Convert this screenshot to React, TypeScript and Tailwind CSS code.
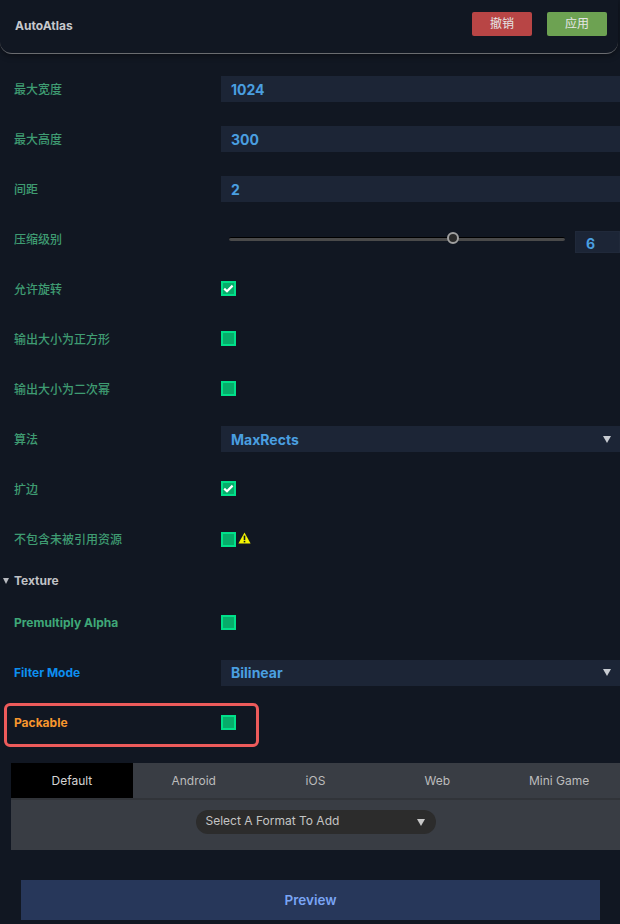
const font = { fontFamily: '"Inter", "Noto Sans CJK SC", sans-serif' };

function Check({ checked, low }: { checked?: boolean; low?: boolean }) {
  return (
    <div className={`w-[15px] h-[15px] border-2 border-[#00e08a] bg-[#06ad6a] flex items-center justify-center ${low ? "" : "-mt-[1px]"}`}>
      {checked && (
        <svg width="11" height="9" viewBox="0 0 11 9">
          <path d="M1.2 4.6 L4 7.2 L9.6 1.6" fill="none" stroke="#ffffff" strokeWidth="2.2" />
        </svg>
      )}
    </div>
  );
}

function Row({ label, color = "text-[#3f9c72] font-medium", children }: { label: string; color?: string; children?: React.ReactNode }) {
  return (
    <div className="h-[50px] flex items-center">
      <div className={`w-[221px] pl-[14px] pt-[1px] text-[12px] ${color}`}>{label}</div>
      <div className="flex-1 flex items-center min-w-0">{children}</div>
    </div>
  );
}

function Field({ value, arrow, className = "" }: { value: string; arrow?: boolean; className?: string }) {
  return (
    <div className={`h-[26px] flex-1 bg-[#1c2536] flex items-center justify-between pl-[10px] pr-[9px] text-[14px] font-bold text-[#4a9fe0] ${className}`}>
      <span>{value}</span>
      {arrow && <span className="w-0 h-0 border-l-[4px] border-r-[4px] border-t-[7px] border-l-transparent border-r-transparent border-t-[#c8ccd2]" />}
    </div>
  );
}

function Slider() {
  return (
    <div className="flex-1 flex items-center">
      <div className="relative w-[336px] ml-[8px] h-[4px] bg-[#4a4a4a] rounded-full border-t border-black">
        <div className="absolute left-[218px] top-[-6px] w-[12px] h-[12px] rounded-full border-2 border-[#a0a0a0] bg-[#2a2a2a]" />
      </div>
      <div className="ml-[10px] w-[45px] h-[22px] bg-[#1c2536] mt-[5px] pl-[10px] text-[14px] font-bold text-[#4a9fe0] leading-[24px] border border-[#20293a]">6</div>
    </div>
  );
}

export default function App() {
  const tabs = ["Default", "Android", "iOS", "Web", "Mini Game"];
  return (
    <div className="w-[620px] h-[924px] overflow-hidden bg-[#111722]" style={font}>
      <header className="w-[618px] h-[54px] flex items-center justify-between pl-[15px] pr-[11px] rounded-b-[12px] border-b border-[#6a6c70] shadow-[0_2px_6px_rgba(0,0,0,0.4)] bg-[#111722]">
        <span className="text-[12px] font-bold text-[#c6c8cc] -mt-[1px]">AutoAtlas</span>
        <div className="flex gap-[15px] -mt-[5px]">
          <button className="w-[60px] h-[24px] rounded-[2px] bg-[#b84545] text-[12px] text-[#e6e6e6]">撤销</button>
          <button className="w-[60px] h-[24px] rounded-[2px] bg-[#6da252] text-[12px] text-[#e6e6e6]">应用</button>
        </div>
      </header>
      <main className="pt-[10px]">
        <Row label="最大宽度"><Field value="1024" /></Row>
        <Row label="最大高度"><Field value="300" /></Row>
        <Row label="间距"><Field value="2" /></Row>
        <Row label="压缩级别"><Slider /></Row>
        <Row label="允许旋转"><Check checked /></Row>
        <Row label="输出大小为正方形"><Check /></Row>
        <Row label="输出大小为二次幂"><Check /></Row>
        <Row label="算法"><Field value="MaxRects" arrow /></Row>
        <Row label="扩边"><Check checked /></Row>
        <Row label="不包含未被引用资源">
          <Check low />
          <svg width="13" height="12" viewBox="0 0 13 12" className="ml-[2px] -mt-[2px]">
            <path d="M6.5 0.5 L12.6 11.5 H0.4 Z" fill="#f5f500" />
            <rect x="5.7" y="3.6" width="1.6" height="4.4" fill="#111722" />
            <rect x="5.7" y="8.8" width="1.6" height="1.6" fill="#111722" />
          </svg>
        </Row>
        <div className="h-[33px] flex items-center pl-[3px] text-[12px] font-bold text-[#c0c2c6]">
          <span className="w-0 h-0 border-l-[3px] border-r-[3px] border-t-[6px] border-l-transparent border-r-transparent border-t-[#b8bac0]" />
          <span className="ml-[5px]">Texture</span>
        </div>
        <Row label="Premultiply Alpha" color="text-[#3fa878] font-bold"><Check low /></Row>
        <Row label="Filter Mode" color="text-[#0d8ff0] font-bold"><Field value="Bilinear" arrow className="mt-[1px]" /></Row>
        <div className="relative">
          <Row label="Packable" color="text-[#f7962d] font-bold"><Check low /></Row>
          <div className="absolute left-[4px] top-[6px] w-[255px] h-[44px] border-[3px] border-[#ee5b5b] rounded-[6px]" />
        </div>
      </main>
      <section className="ml-[11px] mt-[16px] h-[87px] bg-[#393d44]">
        <div className="h-[37px] flex border-b-2 border-[#313439]">
          {tabs.map((t, i) => (
            <div
              key={t}
              className={`w-[122px] flex items-center justify-center text-[12px] ${i === 0 ? "bg-black text-[#d4d4d4]" : "text-[#bcbcbc]"}`}
            >
              {t}
            </div>
          ))}
        </div>
        <div className="flex justify-center pt-[10px]">
          <div className="w-[240px] h-[24px] rounded-full bg-[#2c2c2c] flex items-center justify-between pl-[10px] pr-[11px] text-[12px] text-[#c4c4c4]">
            <span className="-mt-[2px]">Select A Format To Add</span>
            <span className="w-0 h-0 border-l-[4px] border-r-[4px] border-t-[7px] border-l-transparent border-r-transparent border-t-[#c8c8c8]" />
          </div>
        </div>
      </section>
      <div className="pl-[21px] pt-[30px]">
        <button className="w-[579px] h-[40px] bg-[#27375a] text-[13.5px] font-semibold text-[#7aa5f5]">Preview</button>
      </div>
    </div>
  );
}
